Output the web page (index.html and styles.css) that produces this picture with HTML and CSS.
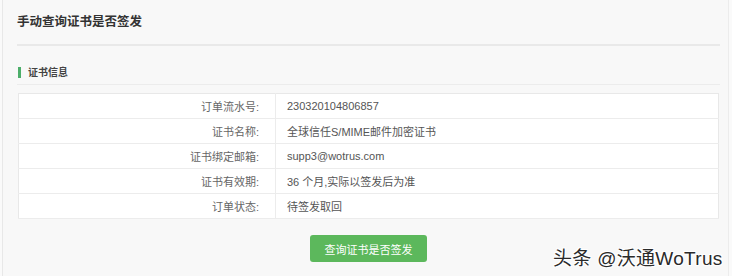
FILE: index.html
```html
<!DOCTYPE html>
<html lang="zh">
<head>
<meta charset="utf-8">
<link rel="stylesheet" href="styles.css">
</head>
<body>
<div class="card">
  <div class="title">手动查询证书是否签发</div>
  <div class="section-head"><span class="bar"></span><span class="section-title">证书信息</span></div>
  <table class="info">
    <tr><td class="label">订单流水号:</td><td class="value">230320104806857</td></tr>
    <tr><td class="label">证书名称:</td><td class="value">全球信任S/MIME邮件加密证书</td></tr>
    <tr><td class="label">证书绑定邮箱:</td><td class="value">supp3@wotrus.com</td></tr>
    <tr><td class="label">证书有效期:</td><td class="value">36 个月,实际以签发后为准</td></tr>
    <tr><td class="label">订单状态:</td><td class="value">待签发取回</td></tr>
  </table>
  <div class="actions"><button class="btn">查询证书是否签发</button></div>
</div>
<div class="watermark">头条 @沃通WoTrus</div>
</body>
</html>
```
FILE: styles.css
```css
html, body {
  margin: 0;
  padding: 0;
  background: #fafafa;
  font-family: "Liberation Sans", "Noto Sans CJK SC", sans-serif;
  overflow: hidden;
}
.card {
  margin-left: 2px;
  width: 727px;
  height: 276px;
  box-sizing: border-box;
  background: #f8f8f8;
  border-left: 1px solid #e8e8e8;
  border-right: 1px solid #ececec;
  padding: 0 8px 0 14px;
}
.title {
  padding-top: 14px;
  box-sizing: border-box;
  line-height: 16px;
  font-size: 12.5px;
  font-weight: 600;
  color: #333;
  border-bottom: 2px solid #e9e9e9;
  height: 46px;
}
.section-head {
  margin-top: 20px;
  height: 18px;
  display: flex;
  align-items: flex-start;
  border-bottom: 1px solid #ececec;
  padding-left: 1px;
}
.bar {
  width: 3px;
  height: 11px;
  background: #4cae6a;
  margin-top: 1px;
}
.section-title {
  margin-left: 7px;
  font-size: 10px;
  line-height: 13px;
  font-weight: bold;
  color: #444;
}
.info {
  margin-top: 8px;
  margin-left: 1px;
  width: 701px;
  border-collapse: collapse;
  background: #fff;
  border: 1px solid #e8e8e8;
}
.info td {
  height: 24px;
  padding: 0;
  font-size: 11px;
  border-bottom: 1px solid #ececec;
}
.label {
  width: 257px;
  text-align: right;
  padding-right: 16px !important;
  box-sizing: border-box;
  color: #666;
  border-right: 1px solid #ececec;
}
.value {
  padding-left: 11px !important;
  color: #555;
}
.actions {
  margin-top: 16px;
  display: flex;
  justify-content: center;
  width: 703px;
}
.btn {
  width: 117px;
  height: 27px;
  border: none;
  border-radius: 3px;
  background: #5cb85c;
  color: #fff;
  font-family: "Liberation Sans", "Noto Sans CJK SC", sans-serif;
  font-size: 11px;
  padding: 0;
}
.watermark {
  position: absolute;
  left: 553px;
  top: 249px;
  font-family: "Liberation Sans", "Noto Sans CJK SC", sans-serif;
  font-size: 19px;
  letter-spacing: 0.3px;
  line-height: 20px;
  color: #2a2a2a;
  text-shadow: 1px 1px 0 #fff, -1px -1px 0 #fff, 1px -1px 0 #fff, -1px 1px 0 #fff;
}
```
